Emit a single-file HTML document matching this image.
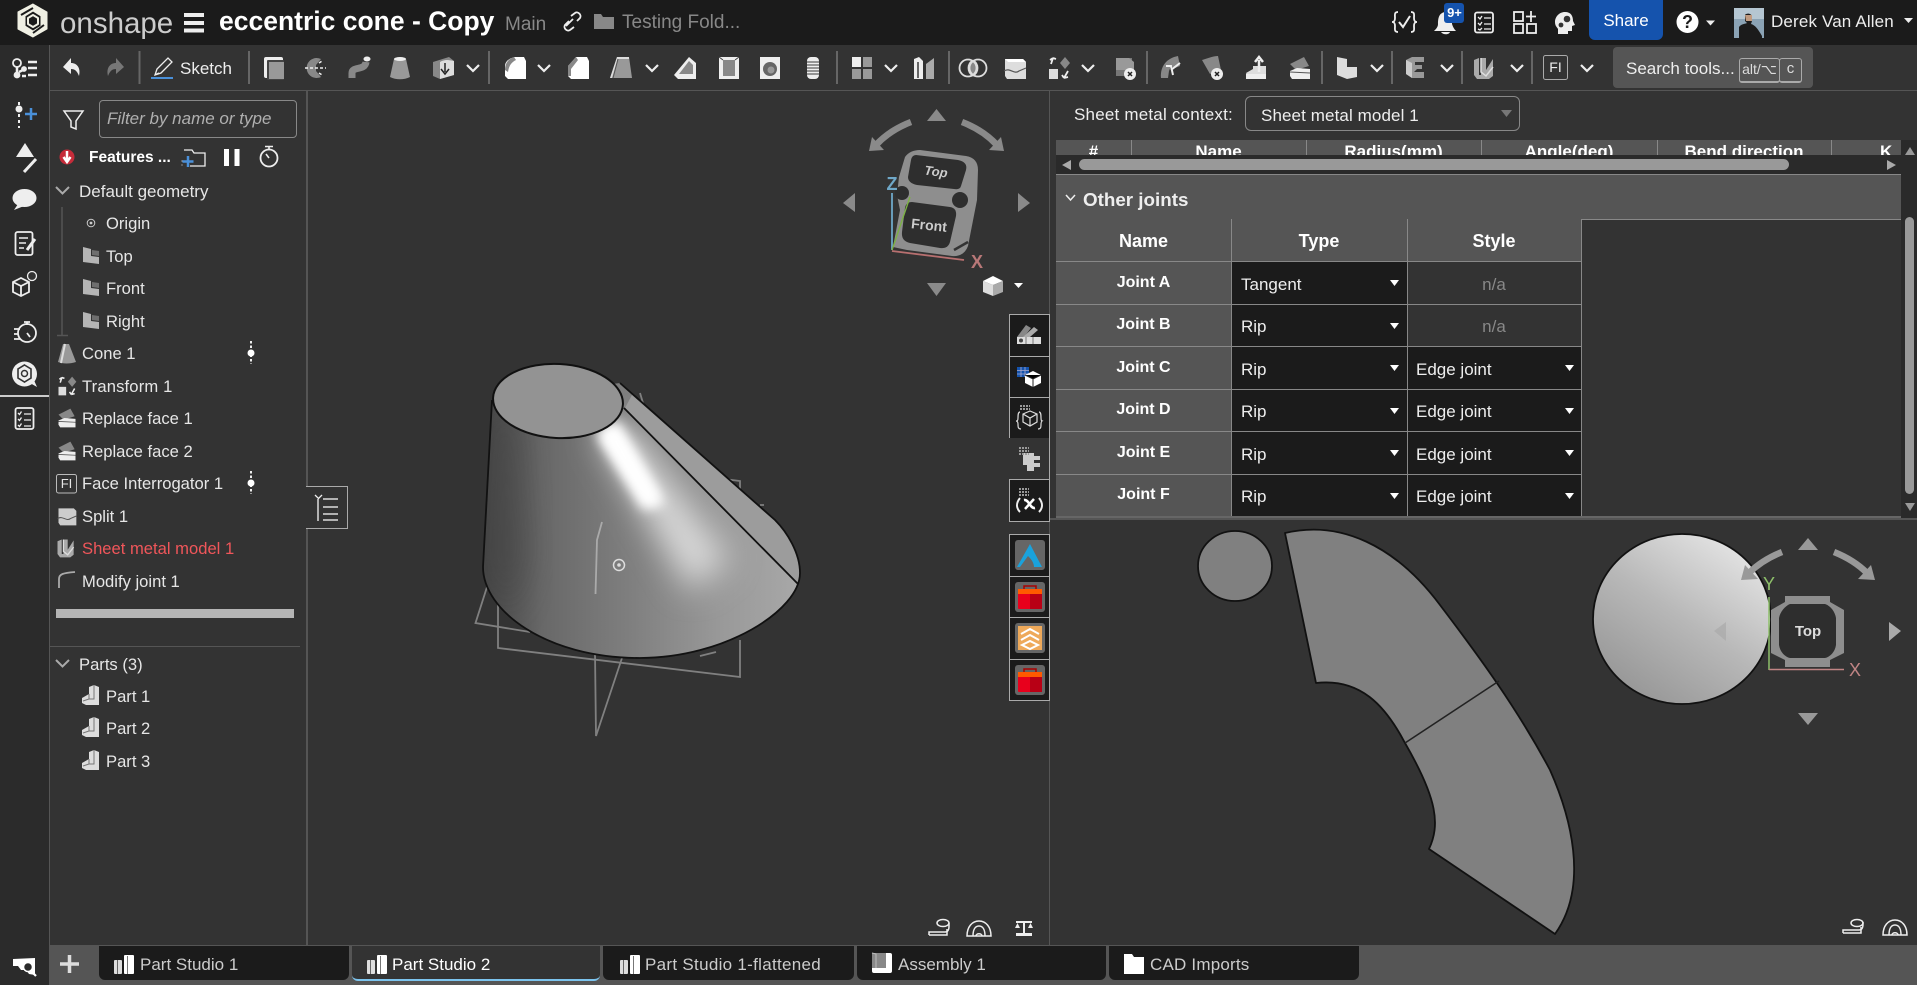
<!DOCTYPE html>
<html><head><meta charset="utf-8"><title>eccentric cone - Copy</title>
<style>
html,body{margin:0;padding:0;width:1917px;height:985px;overflow:hidden;background:#333}
body{position:relative;font-family:"Liberation Sans",sans-serif;color:#e6e6e6;font-size:17px}
.b{position:absolute}
.t{position:absolute;white-space:nowrap;line-height:20px;margin-top:1px}
.l{font-size:16.600px}
.c{text-align:center}
.w{color:#fff}
.d{font-weight:bold;color:#fff}
svg{position:absolute;left:0;top:0}
</style></head><body>
<!-- backgrounds -->
<div class="b" style="left:0;top:0;width:1917px;height:45px;background:#1b1b1b"></div>
<div class="b" style="left:0;top:45px;width:49px;height:940px;background:#2b2b2b"></div>
<div class="b" style="left:49px;top:45px;width:1px;height:940px;background:#555"></div>
<div class="b" style="left:50px;top:90px;width:1867px;height:1px;background:#555"></div>
<div class="b" style="left:306px;top:90px;width:2px;height:856px;background:#555"></div>
<div class="b" style="left:1049px;top:90px;width:1px;height:856px;background:#555"></div>
<div class="b" style="left:50px;top:945px;width:1867px;height:40px;background:#555"></div>
<div class="b" style="left:0;top:395px;width:49px;height:2px;background:#ccc"></div>
<!-- tabs -->
<div class="b" style="left:99px;top:946px;width:250px;height:34px;background:#1b1b1b;border-radius:0 0 6px 6px"></div>
<div class="b" style="left:352px;top:946px;width:248px;height:33px;background:#333;border-bottom:2px solid #7cc4ee;border-radius:0 0 6px 6px"></div>
<div class="b" style="left:603px;top:946px;width:251px;height:34px;background:#1b1b1b;border-radius:0 0 6px 6px"></div>
<div class="b" style="left:857px;top:946px;width:249px;height:34px;background:#1b1b1b;border-radius:0 0 6px 6px"></div>
<div class="b" style="left:1109px;top:946px;width:250px;height:34px;background:#1b1b1b;border-radius:0 0 6px 6px"></div>
<!-- share, search -->
<div class="b" style="left:1589px;top:0;width:74px;height:40px;background:#1553ad;border-radius:0 0 6px 6px"></div>
<div class="b" style="left:1613px;top:47px;width:200px;height:41px;background:#555;border-radius:4px"></div>
<div class="b" style="left:1739px;top:58px;width:39px;height:22px;border:1px solid #aaa;border-bottom-width:2px;border-radius:3px"></div>
<div class="b" style="left:1779px;top:58px;width:21px;height:22px;border:1px solid #aaa;border-bottom-width:2px;border-radius:3px"></div>
<!-- filter -->
<div class="b" style="left:99px;top:100px;width:196px;height:36px;border:1px solid #888;border-radius:4px"></div>
<div class="b" style="left:56px;top:609px;width:238px;height:9px;background:#b5b5b5"></div>
<div class="b" style="left:50px;top:646px;width:250px;height:1px;background:#555"></div>
<div class="b" style="left:306px;top:486px;width:41px;height:41px;background:#333;border:1px solid #aaa;border-left:none"></div>
<!-- side toolbar -->
<div class="b" style="left:1009px;top:314px;width:39px;height:206px;background:#1b1b1b;border:1px solid #aaa"></div>
<div class="b" style="left:1009px;top:438px;width:40px;height:41px;background:#333"></div>
<div class="b" style="left:1009px;top:356px;width:40px;height:1px;background:#aaa"></div>
<div class="b" style="left:1009px;top:397px;width:40px;height:1px;background:#aaa"></div>
<div class="b" style="left:1009px;top:479px;width:40px;height:1px;background:#aaa"></div>
<div class="b" style="left:1009px;top:534px;width:39px;height:165px;background:#1b1b1b;border:1px solid #aaa"></div>
<div class="b" style="left:1009px;top:576px;width:40px;height:1px;background:#aaa"></div>
<div class="b" style="left:1009px;top:617px;width:40px;height:1px;background:#aaa"></div>
<div class="b" style="left:1009px;top:659px;width:40px;height:1px;background:#aaa"></div>
<!-- right panel: select -->
<div class="b" style="left:1245px;top:96px;width:273px;height:33px;border:1px solid #888;border-radius:6px"></div>
<!-- cropped table header -->
<div class="b" style="left:1056px;top:140px;width:845px;height:15px;background:#555;overflow:hidden">
 <div class="t c d" style="left:0;width:75px;top:1px;font-size:17px">#</div>
 <div class="t c d" style="left:75px;width:175px;top:1px;font-size:17px">Name</div>
 <div class="t c d" style="left:250px;width:175px;top:1px;font-size:17px">Radius(mm)</div>
 <div class="t c d" style="left:425px;width:176px;top:1px;font-size:17px">Angle(deg)</div>
 <div class="t c d" style="left:601px;width:174px;top:1px;font-size:17px">Bend direction</div>
 <div class="t d" style="left:824px;top:1px;font-size:17px">K</div>
 <div class="b" style="left:75px;top:0;width:1px;height:15px;background:#888"></div>
 <div class="b" style="left:250px;top:0;width:1px;height:15px;background:#888"></div>
 <div class="b" style="left:425px;top:0;width:1px;height:15px;background:#888"></div>
 <div class="b" style="left:601px;top:0;width:1px;height:15px;background:#888"></div>
 <div class="b" style="left:775px;top:0;width:1px;height:15px;background:#888"></div>
</div>
<div class="b" style="left:1056px;top:155px;width:845px;height:19px;background:#2a2a2a"></div>
<div class="b" style="left:1079px;top:159px;width:710px;height:11px;background:#999;border-radius:6px"></div>
<div class="b" style="left:1901px;top:140px;width:16px;height:378px;background:#2a2a2a"></div>
<div class="b" style="left:1905px;top:217px;width:9px;height:277px;background:#999;border-radius:5px"></div>
<!-- other joints header -->
<div class="b" style="left:1056px;top:174px;width:845px;height:44px;background:#555;border-top:1px solid #888;border-bottom:1px solid #888"></div>
<div class="t" style="left:1083px;top:189px;font-size:18.800px;font-weight:bold;color:#eee">Other joints</div>
<!-- joints table -->
<div class="b" style="left:1056px;top:219px;width:175px;height:298px;background:#555"></div>
<div class="b" style="left:1231px;top:219px;width:350px;height:42px;background:#555"></div>
<div class="b" style="left:1231px;top:261px;width:176px;height:256px;background:#1b1b1b"></div>
<div class="b" style="left:1407px;top:346px;width:174px;height:171px;background:#1b1b1b"></div>
<div class="b" style="left:1056px;top:261px;width:525px;height:1px;background:#888"></div>
<div class="b" style="left:1056px;top:304px;width:525px;height:1px;background:#888"></div>
<div class="b" style="left:1056px;top:346px;width:525px;height:1px;background:#888"></div>
<div class="b" style="left:1056px;top:389px;width:525px;height:1px;background:#888"></div>
<div class="b" style="left:1056px;top:431px;width:525px;height:1px;background:#888"></div>
<div class="b" style="left:1056px;top:474px;width:525px;height:1px;background:#888"></div>
<div class="b" style="left:1231px;top:219px;width:1px;height:298px;background:#888"></div>
<div class="b" style="left:1407px;top:219px;width:1px;height:298px;background:#888"></div>
<div class="b" style="left:1581px;top:219px;width:1px;height:298px;background:#888"></div>
<div class="b" style="left:1056px;top:516px;width:845px;height:2px;background:#666"></div>
<div class="b" style="left:1050px;top:518px;width:867px;height:2px;background:#555"></div>

<svg width="1917" height="985" viewBox="0 0 1917 985" xmlns="http://www.w3.org/2000/svg">
<defs>
<linearGradient id="cg" gradientUnits="userSpaceOnUse" x1="485" y1="520" x2="800" y2="520">
 <stop offset="0" stop-color="#474747"/><stop offset=".18" stop-color="#686868"/><stop offset=".45" stop-color="#7e7e7e"/><stop offset=".75" stop-color="#999"/><stop offset="1" stop-color="#a8a8a8"/>
</linearGradient>
<linearGradient id="bg" gradientUnits="userSpaceOnUse" x1="1740" y1="540" x2="1630" y2="700">
 <stop offset="0" stop-color="#e6e6e6"/><stop offset=".5" stop-color="#b8b8b8"/><stop offset="1" stop-color="#959595"/>
</linearGradient>
<filter id="bl" x="-50%" y="-50%" width="200%" height="200%"><feGaussianBlur stdDeviation="6"/></filter>
<filter id="bl2" x="-50%" y="-50%" width="200%" height="200%"><feGaussianBlur stdDeviation="16"/></filter>
<clipPath id="cc"><path d="M492 400L483 567C483 610 545 658 640 658C725 658 800 610 800 573C800 553 787 532 775 520L620 383Z"/></clipPath>
<g id="pl"><path d="M0 -9L8 -7V0L16 1V8L0 6Z" fill="#b5b5b5"/><path d="M9 -6L16 -5V0L9 -1Z" fill="#6e6e6e"/></g>
<g id="prt"><path d="M0 2L7 -2V-9L12 -11L17 -9V9H4L0 7Z" fill="#ddd"/><path d="M7 -2V3L1 5M12 -11V3H7" fill="none" stroke="#777" stroke-width="1"/></g>
<g id="tb"><rect x="0" y="-5" width="8" height="14" rx="1" fill="#ddd"/><rect x="3" y="-5" width="1" height="14" fill="#666"/><rect x="10" y="-10" width="10" height="19" rx="1" fill="#fff"/><rect x="13" y="-9" width="1" height="18" fill="#777"/></g>
<path id="chv" d="M-6 -3L0 3L6 -3" fill="none" stroke="#eee" stroke-width="2.200"/>
</defs>

<!-- logo -->
<g fill="none" stroke="#f0f0e4" stroke-linejoin="round">
 <path d="M33 4L47 12V29L33 37L18 29V12Z" fill="#f0f0e4" stroke-width="1"/>
 <path d="M33 11L41 16V26L33 31L25 26V16Z" fill="#1b1b1b" stroke-width="1"/>
 <path d="M33 15L38 18V24L33 27L28 24V18Z" stroke-width="2"/>
 <path d="M21 15L33 8M44 25L33 33" stroke="#1b1b1b" stroke-width="2"/>
</g>
<!-- hamburger -->
<g fill="#eee"><rect x="184" y="13" width="20" height="4"/><rect x="184" y="21" width="20" height="4"/><rect x="184" y="28.500" width="20" height="4"/></g>
<!-- link -->
<path d="M566 26L573 19M571 16L575 13C578 11 582 15 580 18L577 21M569 21L565 25C563 28 567 32 570 30L574 27" fill="none" stroke="#eee" stroke-width="1.800"/>
<path d="M594 14H601L603 17H614V29H594Z" fill="#888"/>
<!-- top right -->
<g fill="none" stroke="#eee" stroke-width="1.800">
 <path d="M1398 12C1394 12 1395 15 1395 18C1395 21 1394 22 1392 22C1394 22 1395 23 1395 26C1395 29 1394 32 1398 32M1411 12C1415 12 1414 15 1414 18C1414 21 1415 22 1417 22C1415 22 1414 23 1414 26C1414 29 1415 32 1411 32"/>
 <path d="M1399 22L1403 27L1410 16" stroke-width="2"/>
 <rect x="1475" y="12.500" width="18" height="20" rx="2"/>
 <path d="M1478 17l2 2 2-3M1478 23l2 2 2-3M1478 29l2 1 2-2M1484 18h7M1484 24h7M1484 29h7" stroke-width="1.300"/>
 <rect x="1514" y="12" width="9" height="9"/><rect x="1514" y="24" width="9" height="9"/><rect x="1527" y="24" width="9" height="9"/>
 <path d="M1531 11v11M1526 16.500h10"/>
</g>
<path d="M1445 12C1439 13 1438 18 1438 24C1438 27 1436 29 1434 31H1456C1454 29 1453 27 1452 24V18ZM1441 32H1450C1449 35 1443 35 1441 32Z" fill="#eee"/>
<rect x="1444" y="3" width="20" height="20" rx="3" fill="#1553ad"/>
<path d="M1565 12C1559 12 1555 17 1555 22C1555 26 1557 27 1558 29V34H1568V31H1572V26L1575 25L1573 21C1573 16 1571 12 1565 12Z" fill="#eee"/>
<circle cx="1567" cy="19" r="3.300" fill="#333"/><circle cx="1561" cy="25" r="2.400" fill="#333"/>
<circle cx="1687.500" cy="22" r="11" fill="#fff"/>
<path d="M1715 20.500h-9l4.500 5z" fill="#eee"/><path d="M1904 18h9l-4.500 5z" fill="#eee"/>
<rect x="1734" y="8" width="30" height="30" fill="#8ba3b5"/><rect x="1734" y="8" width="30" height="11" fill="#b5c6d2"/>
<path d="M1739 38V27C1741 24 1745 24 1747 23L1745 21V15C1746 13 1751 13 1752 16V21L1751 24C1755 25 1758 29 1762 36V38Z" fill="#1b1b1b"/>
<path d="M1745 15h7v6h-6z" fill="#c09a80"/>

<!-- toolbar -->
<path d="M63 67L71 58V63C77 63 81 68 79 76C77 71 75 69 71 69V74Z" fill="#eee"/>
<path d="M124 67L116 58V63C110 63 106 68 108 76C110 71 112 69 116 69V74Z" fill="#777"/>
<g fill="#666"><rect x="138.500" y="51" width="2" height="33"/><rect x="248" y="51" width="2" height="33"/><rect x="488" y="51" width="2" height="33"/><rect x="836" y="51" width="2" height="33"/><rect x="948" y="51" width="2" height="33"/><rect x="1146" y="51" width="2" height="33"/><rect x="1321" y="51" width="2" height="33"/><rect x="1391" y="51" width="2" height="33"/><rect x="1461" y="51" width="2" height="33"/><rect x="1531" y="51" width="2" height="33"/></g>
<path d="M155 75L157 69L168 58L172 62L161 73ZM155 75L159 73" fill="none" stroke="#eee" stroke-width="1.300"/>
<rect x="151" y="77" width="22" height="2" fill="#4a90d9"/>
<!-- 274 part studio -->
<g transform="translate(274 68)"><rect x="-10" y="-11" width="19" height="21" rx="2" fill="#eee"/><rect x="-7" y="-8" width="17" height="20" rx="1" fill="#444"/><rect x="-5" y="-6" width="15" height="17" fill="#999"/></g>
<!-- 315 revolve -->
<g transform="translate(315 68)"><path d="M6 -9A10 10 0 1 0 6 9L1 3V-3Z" fill="#888"/><path d="M-10 0H11M4 -5L7 -7M4 5L7 7" stroke="#eee" stroke-width="1.500" stroke-dasharray="3 2" fill="none"/></g>
<!-- 359 sweep -->
<g transform="translate(359 68)"><path d="M-7 10V5C-7 -2 6 3 7 -6" fill="none" stroke="#888" stroke-width="7"/><ellipse cx="8" cy="-9" rx="3.500" ry="2.500" fill="#eee"/></g>
<!-- 400 loft -->
<g transform="translate(400 68)"><path d="M-6 -9H6L10 9C4 12 -4 12 -10 9Z" fill="#999"/><ellipse cx="0" cy="-9" rx="6" ry="2" fill="#eee"/></g>
<!-- 443 thicken -->
<g transform="translate(443 68)"><path d="M-10 -6L6 -11L11 -7V7L-3 11L-10 8Z" fill="#888"/><path d="M-3 -6C2 -9 6 -8 11 -7V7L-3 11Z" fill="#ddd"/><path d="M2 -5V4M-2 1L2 6L6 1" stroke="#222" stroke-width="1.500" fill="none"/></g>
<use href="#chv" x="473" y="68"/>
<!-- 515 fillet -->
<g transform="translate(515 68)"><path d="M-10 -2C-10 -7 -5 -10 0 -11L9 -11L11 -7V11H-7L-10 8Z" fill="#fff"/><path d="M-10 2C-10 -6 -5 -10 -1 -11L1 -8C-3 -6 -6 -3 -7 4Z" fill="#888"/></g>
<use href="#chv" x="544" y="68"/>
<!-- 578 chamfer -->
<g transform="translate(578 68)"><path d="M-10 -2L-2 -11H9L11 -7V11H-7L-10 8Z" fill="#fff"/><path d="M-10 -2L-2 -11L0 -8L-7 1V8L-10 8Z" fill="#888"/></g>
<!-- 621 draft -->
<g transform="translate(621 68)"><path d="M-4 -11H8L11 10H-11Z" fill="#999"/><path d="M-4 -11H8L8 -9H-3.500L-9 10H-11Z" fill="#ddd"/><path d="M-3 -9L-8 10" stroke="#555"/></g>
<use href="#chv" x="652" y="68"/>
<!-- 685 rib -->
<g transform="translate(685 68)"><path d="M4 -11L11 -5V11H-7L-11 7Z" fill="#eee"/><path d="M4 -7L8 -3V6H-6Z" fill="#888"/></g>
<!-- 729 shell -->
<g transform="translate(729 68)"><rect x="-10" y="-11" width="20" height="22" fill="#eee"/><rect x="-6" y="-8" width="12" height="16" fill="#888"/><path d="M-10 -11L-6 -8M10 -11L6 -8" stroke="#444"/></g>
<!-- 770 hole -->
<g transform="translate(770 68)"><rect x="-10" y="-11" width="20" height="22" fill="#eee"/><circle cx="0" cy="1" r="7" fill="#666"/><circle cx="1" cy="2" r="3.500" fill="#999"/></g>
<!-- 813 thread -->
<g transform="translate(813 68)"><rect x="-6" y="-11" width="12" height="22" rx="4" fill="#eee"/><path d="M-6 -6H6M-6 -3H6M-6 0H6M-6 3H6M-6 6H6" stroke="#777" stroke-width="1.500"/></g>
<!-- 862 pattern -->
<g transform="translate(862 68)" fill="#999"><rect x="-10" y="-11" width="9" height="10" fill="#eee"/><rect x="1" y="-11" width="9" height="10"/><rect x="-10" y="1" width="9" height="10"/><rect x="1" y="1" width="9" height="10"/></g>
<use href="#chv" x="891" y="68"/>
<!-- 924 mirror -->
<g transform="translate(924 68)"><path d="M-10 -9L-5 -11L-1 -7V11H-10Z" fill="#eee"/><path d="M10 -10V11H2V-4Z" fill="#aaa"/><path d="M0 -11V11" stroke="#333" stroke-width="1.500"/><path d="M-6 -6V10" stroke="#666" stroke-width="2"/></g>
<!-- 973 boolean -->
<g transform="translate(973 68)" fill="none" stroke="#ddd" stroke-width="1.800"><path d="M0 -7.500A8.500 8.500 0 0 1 0 7.500A8.500 8.500 0 0 1 0 -7.500" fill="#888"/><circle cx="-5" cy="0" r="8.500"/><circle cx="5" cy="0" r="8.500"/></g>
<!-- 1015 split -->
<g transform="translate(1015 68)"><path d="M-10 -9H8L11 -6V11H-8L-10 8Z" fill="#ddd"/><path d="M-10 -9H8L11 -6H-7Z" fill="#fff"/><path d="M-11 3C-5 -1 -1 7 4 3L11 0" fill="none" stroke="#555" stroke-width="1.200"/></g>
<!-- 1059 transform -->
<g transform="translate(1059 68)"><path d="M1 -5L6 -11L11 -5L6 1Z" fill="#888"/><rect x="-10" y="1" width="9" height="10" fill="#ddd"/><path d="M-8 -4L-6 -10M-6 -10L-9 -8M-6 -10L-3 -9M9 3L5 10M5 10L9 9M5 10L3 7" stroke="#eee" stroke-width="1.800" fill="none"/></g>
<use href="#chv" x="1088" y="68"/>
<!-- 1125 delete part -->
<g transform="translate(1125 68)"><rect x="-9" y="-10" width="16" height="18" fill="#777"/><path d="M-9 -10H4L9 -6V2H-9Z" fill="#999"/><circle cx="5" cy="6" r="6" fill="#eee"/><path d="M3 4L7 8M7 4L3 8" stroke="#222" stroke-width="1.500"/></g>
<!-- 1170 modify -->
<g transform="translate(1170 68)"><path d="M-9 10C-10 -2 -3 -10 8 -12L10 -2L5 0L1 -2L-1 3L-2 10Z" fill="#888"/><path d="M-4 -2L1 -2L3 7M10 -5L1 2" stroke="#eee" stroke-width="2" fill="none"/></g>
<!-- 1213 del face -->
<g transform="translate(1213 68)"><path d="M-11 -8C-4 -10 0 -12 5 -12L8 2L-3 6Z" fill="#888"/><circle cx="4" cy="6" r="6" fill="#eee"/><path d="M2 4L6 8M6 4L2 8" stroke="#222" stroke-width="1.500"/></g>
<!-- 1256 move face -->
<g transform="translate(1256 68)"><path d="M-10 5L-3 1V-2L10 -2V10H-8Z" fill="#ddd"/><rect x="-10" y="6" width="20" height="5" fill="#eee"/><path d="M3 4V-8M-1 -6L3 -11L7 -6" stroke="#eee" stroke-width="2.500" fill="none"/></g>
<!-- 1300 replace -->
<g transform="translate(1300 68)"><path d="M-10 -4L4 -11L9 -2L-4 2Z" fill="#888"/><path d="M-10 3L-3 0L10 1V11H-8L-10 8Z" fill="#eee"/><path d="M-10 4L10 5" stroke="#555"/></g>
<!-- 1347 plane -->
<g transform="translate(1347 68)"><path d="M-10 -11L0 -9V-1L10 -1V9L0 11L-10 7Z" fill="#ddd"/></g>
<use href="#chv" x="1377" y="68"/>
<!-- 1415 -->
<g transform="translate(1415 68)"><path d="M-9 -8L-3 -11H9V-6H0V-3L7 -3V1L2 1L-1 4L9 4V10H-3L-9 6Z" fill="#999"/><path d="M-9 -8L-3 -5V10L-9 6Z" fill="#ccc"/></g>
<use href="#chv" x="1447" y="68"/>
<!-- 1484 sheet metal -->
<g transform="translate(1484 68)"><path d="M-10 -8L-5 -10V7H-3V-10H2V2L9 -9V8L5 11H-7L-10 7Z" fill="#aaa"/><path d="M-3 -10V4L2 8L9 -1" stroke="#ddd" stroke-width="1.500" fill="none"/></g>
<use href="#chv" x="1517" y="68"/>
<rect x="1543.500" y="55.500" width="24" height="24" rx="2" fill="none" stroke="#aaa"/>
<use href="#chv" x="1587" y="68"/>

<!-- left rail -->
<g fill="none" stroke="#eee" stroke-width="1.800">
 <circle cx="17" cy="63" r="4"/><circle cx="17" cy="75" r="2.500" fill="#eee"/><circle cx="24" cy="69" r="2" fill="#eee"/>
 <path d="M17 67V73M19 72L23 70M28 62H37M28 68H37M28 75H37M22 76H26" stroke-width="2.500"/>
 <path d="M19 102V128" stroke-dasharray="3 3" stroke-width="2"/>
 <path d="M16 157H34L25 143Z" fill="#eee" stroke="none"/>
 <path d="M24 172L36 159" stroke-width="3"/>
 <rect x="15.500" y="232" width="17" height="23" rx="2"/>
 <path d="M19 238H28M19 243H26M19 248H24" stroke-width="1.500"/><path d="M27 250L35 239" stroke-width="3"/>
 <path d="M13 282L21 278L29 282V292L21 296L13 292ZM13 282L21 286L29 282M21 286V296"/>
 <circle cx="32" cy="276" r="4.500" fill="#333" stroke-width="1.300"/>
 <circle cx="27" cy="333" r="9"/><path d="M24 322H30M27 325V322M27 333L30 337"/><path d="M14 329H20M14 334H18M14 339H20"/>
 <rect x="15.500" y="408" width="18" height="21" rx="2"/>
 <path d="M18 413l1.500 1.500 2-3M18 419l1.500 1.500 2-3M18 425l1.500 1.500 2-3M24 414h7M24 420h7M24 426h7" stroke-width="1.300"/>
</g>
<circle cx="19" cy="109" r="3.500" fill="#eee"/>
<path d="M31 108V120M25 114H37" stroke="#4a90d9" stroke-width="2.500"/>
<ellipse cx="24.500" cy="198" rx="12" ry="9" fill="#eee"/><path d="M18 204L14 210L24 206Z" fill="#eee"/>
<circle cx="24.500" cy="374" r="12.500" fill="#eee"/><path d="M30 383L37 387L33 378Z" fill="#eee"/>
<path d="M24.500 365L31 369V378L24.500 382L18 378V369Z" fill="none" stroke="#333" stroke-width="1.600"/><circle cx="24.500" cy="373.500" r="3" fill="none" stroke="#333" stroke-width="1.500"/>
<path d="M13 959L35 958V975L29 974L26 970H21L18 966H13Z" fill="#fff"/><circle cx="28" cy="967" r="4.500" fill="#2b2b2b" stroke="#fff" stroke-width="1.500"/><path d="M31 971L36 976" stroke="#fff" stroke-width="2.200"/>

<!-- panel icons -->
<path d="M64 111H83L76 121V129L71 127V121Z" fill="none" stroke="#eee" stroke-width="1.500"/>
<circle cx="67" cy="157" r="7.500" fill="#c62c3a"/><path d="M67 151V160M63.500 157L67 162L70.500 157" stroke="#fff" stroke-width="2.500" fill="none"/>
<path d="M184 150H192L194 153H205V166H190" fill="none" stroke="#eee" stroke-width="1.300"/><path d="M182 166V158" stroke="#888" stroke-dasharray="2 2"/>
<path d="M188 156V167M182.500 161.500H193.500" stroke="#4a90d9" stroke-width="2.500"/>
<rect x="224" y="149" width="5" height="17" fill="#fff"/><rect x="234.500" y="149" width="5" height="17" fill="#fff"/>
<circle cx="269" cy="158" r="8.500" fill="none" stroke="#eee" stroke-width="1.800"/><path d="M265 146.500H273M269 147V150M269 158L266 154" stroke="#eee" stroke-width="1.600"/>
<path d="M56 187L62.500 193.500L69 187" fill="none" stroke="#aaa" stroke-width="2"/>
<path d="M62 207V335M57 335.500H68" stroke="#555" stroke-width="1.500"/>
<circle cx="91" cy="223" r="3.800" fill="none" stroke="#ccc"/><circle cx="91" cy="223" r="1.400" fill="#ccc"/>
<use href="#pl" x="83" y="256"/><use href="#pl" x="83" y="288"/><use href="#pl" x="83" y="321"/>
<!-- feature icons -->
<path d="M63 344H69L76 362C70 364 63 364 58 362Z" fill="#999"/><path d="M65 344L61 363" stroke="#ddd" stroke-width="2"/>
<g transform="translate(67 386) scale(.85)"><path d="M1 -5L6 -11L11 -5L6 1Z" fill="#888"/><rect x="-10" y="1" width="9" height="10" fill="#ddd"/><path d="M-8 -4L-6 -10M-6 -10L-9 -8M-6 -10L-3 -9M9 3L5 10M5 10L9 9M5 10L3 7" stroke="#eee" stroke-width="1.800" fill="none"/></g>
<g transform="translate(67 418) scale(.85)"><path d="M-10 -4L4 -11L9 -2L-4 2Z" fill="#888"/><path d="M-10 3L-3 0L10 1V11H-8L-10 8Z" fill="#eee"/><path d="M-10 4L10 5" stroke="#555"/></g>
<g transform="translate(67 451) scale(.85)"><path d="M-10 -4L4 -11L9 -2L-4 2Z" fill="#888"/><path d="M-10 3L-3 0L10 1V11H-8L-10 8Z" fill="#eee"/><path d="M-10 4L10 5" stroke="#555"/></g>
<rect x="56.500" y="474.500" width="20" height="18.500" rx="2" fill="none" stroke="#bbb"/>
<g transform="translate(67 516) scale(.85)"><path d="M-10 -9H8L11 -6V11H-8L-10 8Z" fill="#ccc"/><path d="M-11 3C-5 -1 -1 7 4 3L11 0" fill="none" stroke="#555" stroke-width="1.200"/></g>
<g transform="translate(66 548) scale(.85)"><path d="M-10 -8L-5 -10V7H-3V-10H2V2L9 -9V8L5 11H-7L-10 7Z" fill="#aaa"/><path d="M-3 -10V4L2 8L9 -1" stroke="#ddd" stroke-width="1.500" fill="none"/></g>
<path d="M59 588V579C59 574 63 573 75 572" fill="none" stroke="#aaa" stroke-width="1.800"/>
<g stroke="#eee" stroke-width="2" stroke-dasharray="2.500 2"><path d="M251 341V364"/><path d="M251 471V494"/></g>
<circle cx="251" cy="353" r="3.500" fill="#fff"/><circle cx="251" cy="483" r="3.500" fill="#fff"/>
<path d="M56 660L62.500 666.500L69 660" fill="none" stroke="#aaa" stroke-width="2"/>
<use href="#prt" x="82" y="696"/><use href="#prt" x="82" y="728"/><use href="#prt" x="82" y="761"/>
<!-- collapse icon -->
<path d="M318 499V521M323 499H338M323 507H338M323 514H338M323 520H338" stroke="#ddd" stroke-width="1.500"/><path d="M315 495L318.500 498.500L322 495" fill="none" stroke="#eee" stroke-width="1.300"/>
<!-- tabs -->
<path d="M60 964H79M69.500 955V973" stroke="#ddd" stroke-width="3.500"/>
<use href="#tb" x="114" y="965"/><use href="#tb" x="367" y="965"/><use href="#tb" x="620" y="965"/>
<g transform="translate(882 963)"><rect x="-10" y="-10" width="20" height="20" rx="2" fill="#fff"/><path d="M-10 -10H4V5H-10Z" fill="#888"/><path d="M-10 -10L-6 -9V5" stroke="#bbb" fill="none"/></g>
<path d="M1124 954H1132L1134 957H1144V974H1124Z" fill="#fff"/>

<!-- viewport 1: reference planes behind cone -->
<g fill="none" stroke="#808080" stroke-width="1.800">
 <path d="M487 587L475.500 623L530 632"/>
 <path d="M498 597V648L740 677V640"/>
 <path d="M595 653L596 736L622 658"/>
 <path d="M692 475L740 481V527"/>
 <path d="M640 393L643 403M760 505H764M700 656L716 652"/>
</g>
<!-- cone -->
<path d="M492 400L483 567C483 610 545 658 640 658C725 658 800 610 800 573C800 553 787 532 775 520L620 383Z" fill="url(#cg)"/>
<g clip-path="url(#cc)">
 <path d="M520 420L490 400L484 570L510 620L530 560Z" fill="#3a3a3a" opacity=".35" filter="url(#bl2)"/>
 <path d="M595 430L630 425L730 560L690 590Z" fill="#d8d8d8" filter="url(#bl2)"/>
 <path d="M596 432L618 420L665 505L643 510Z" fill="#fff" filter="url(#bl)"/>
 <path d="M600 436L615 428L660 498L648 503Z" fill="#fff" filter="url(#bl)"/>
 <path d="M625 408L798 584L820 540L640 380Z" fill="#9c9c9c"/>
</g>
<path d="M492 400L483 567C483 610 545 658 640 658C725 658 800 610 800 573C800 553 787 532 775 520L620 383" fill="none" stroke="#111" stroke-width="1.800"/>
<path d="M624 408L798 584" stroke="#111" stroke-width="1.800"/>
<ellipse cx="558" cy="401" rx="65" ry="37" fill="#939393" stroke="#111" stroke-width="2" transform="rotate(3 558 401)"/>
<path d="M602 522L597 540L595.500 594" fill="none" stroke="#aaa" stroke-width="1.800"/>
<circle cx="619" cy="565" r="5.500" fill="none" stroke="#ddd" stroke-width="1.500"/><circle cx="619" cy="565" r="1.800" fill="#ddd"/>

<!-- cube 1 -->
<g fill="#8a8a8a">
 <path d="M927 121L936.500 109L946 121Z"/><path d="M843 203L855 193V212Z"/><path d="M1030 203L1018 193V212Z"/><path d="M927 283H946L936.500 296Z"/>
 <path d="M869 151L884 150L872 137Z"/><path d="M1004 151L989 150L1001 137Z"/>
</g>
<path d="M911 122Q890 130 876 145M962 122Q983 130 997 145" fill="none" stroke="#8a8a8a" stroke-width="6.500"/>
<path d="M905 157Q910 150 920 150L966 156Q978 158 978 170L977 200L968 246Q964 257 952 256L907 250L893 247L900 210L897 195L899 177Z" fill="#8e8e8e"/>
<path d="M916 155L958 160Q968 162 966 170L961 186Q960 190 954 189L917 185Q908 183 908 177L911 160Q912 155 916 155Z" fill="#2e2e2e"/>
<path d="M912 202L950 207Q957 208 956 216L950 242Q948 249 940 248L910 243Q901 241 902 232L905 208Q906 202 912 202Z" fill="#2e2e2e"/>
<circle cx="902" cy="193" r="7" fill="#2e2e2e"/><circle cx="960" cy="200" r="8" fill="#2e2e2e"/>
<path d="M892 193V250" stroke="#6fa8c8" stroke-width="1.800"/><path d="M892 251L964 260" stroke="#b87070" stroke-width="1.800"/><path d="M892 250L910 197" stroke="#7cb342" stroke-width="1.300"/>
<path d="M954 250L968 242" stroke="#333" stroke-width="2.500"/>
<path d="M983 281L993 276L1003 281L993 285Z" fill="#fff"/><path d="M983 281L993 285V296L983 292Z" fill="#ddd"/><path d="M1003 281L993 285V296L1003 292Z" fill="#aaa"/>
<path d="M1014 283h9l-4.500 5z" fill="#fff"/>

<!-- bottom icons vp1 -->
<g fill="none" stroke="#eee" stroke-width="1.500" transform="translate(938 927)"><path d="M-9 8V5H7C10 5 11 3 11 -1V-4"/><ellipse cx="5" cy="-4" rx="6" ry="3.500"/><path d="M-9 8H9V2"/></g>
<g fill="none" stroke="#eee" stroke-width="1.500" transform="translate(979 929)"><path d="M-12 7C-12 -2 -7 -8 0 -8C7 -8 12 -2 12 7Z"/><path d="M-6 7C-6 1 -4 -3 0 -3C4 -3 6 1 6 7M-3 7C-3 4 3 4 3 7"/></g>
<g fill="#eee" transform="translate(1024 929)"><rect x="-8" y="-8" width="16" height="2"/><rect x="-1" y="-8" width="2" height="12"/><rect x="-8" y="4" width="16" height="3"/><path d="M-9 -1H-4L-6.500 -6ZM4 -1H9L6.500 -6Z"/></g>

<!-- side toolbar icons -->
<g transform="translate(1029 337)"><path d="M-12 0L-3 -12L2 -9L-5 0Z" fill="#888"/><path d="M-6 0L5 -10L9 -7L1 0Z" fill="#aaa"/><rect x="-12" y="0" width="24" height="7" fill="#ddd"/><circle cx="-8" cy="3.500" r="2" fill="#444"/><path d="M-3 0V7M4 0V7" stroke="#777"/></g>
<g transform="translate(1029 377)"><rect x="-12" y="-10" width="12" height="10" fill="#1553ad"/><path d="M-8 -10V0M-4 -10V0M-12 -6.500H0M-12 -3H0" stroke="#aac" stroke-width=".8"/><path d="M4 -6L12 -2V6L4 10L-4 6V-2Z" fill="#fff"/><path d="M-4 -2L4 2L12 -2M4 2V10" stroke="#222" stroke-width="1"/></g>
<g transform="translate(1029 418)" fill="none" stroke="#ddd" stroke-width="1.200"><path d="M-6 -4L1 -7L8 -4V4L1 8L-6 4ZM-6 -4L1 0L8 -4M1 0V8"/><path d="M-9 -6C-11 -6 -11 -3 -11 0C-11 3 -12 3 -13 3C-12 3 -11 4 -11 6C-11 9 -11 11 -8 11M10 -6C12 -6 12 -3 12 0C12 3 13 3 13 3C13 3 12 4 12 6C12 9 12 11 9 11"/><path d="M-9 -12H1M-9 -9H1" stroke="#999" stroke-width="2" stroke-dasharray="2 1"/></g>
<g transform="translate(1029 459)"><path d="M-6 -6H5V-3H11V1H5V4H11V8H5V12H-2V6H-6Z" fill="#ccc"/><path d="M-10 -11H0M-10 -8H0M-10 -5H0" stroke="#999" stroke-width="2" stroke-dasharray="2 1"/></g>
<g transform="translate(1029 501)"><path d="M-9 -3C-13 2 -13 7 -9 11M10 -3C14 2 14 7 10 11" fill="none" stroke="#eee" stroke-width="2"/><path d="M-5 -1C0 -2 1 8 6 7M5 -2L-4 8" stroke="#fff" stroke-width="2.500" fill="none"/><path d="M-10 -12H0M-10 -9H0M-10 -6H0" stroke="#999" stroke-width="2" stroke-dasharray="2 1"/></g>
<rect x="1015" y="540" width="30" height="30" rx="3" fill="#666"/>
<path d="M1030 544L1042 567H1034C1034 562 1030 558 1028 556L1020 567H1017L1030 544Z" fill="#1aa2dc"/>
<rect x="1015" y="582" width="30" height="30" rx="3" fill="#666"/>
<path d="M1024 589V586H1036V589" fill="none" stroke="#a00" stroke-width="1.500"/><rect x="1018" y="589" width="24" height="20" rx="1" fill="#e8001c"/><rect x="1030" y="589" width="12" height="20" fill="#b80015"/><rect x="1018" y="589" width="24" height="5" fill="#ff5a00"/>
<rect x="1015" y="623" width="30" height="30" rx="3" fill="#666"/>
<rect x="1018" y="626" width="24" height="24" fill="#eea95a"/><path d="M1021 634L1030 629L1039 634M1021 640L1030 635L1039 640M1022 645L1030 641L1038 645L1030 649Z" fill="none" stroke="#fff" stroke-width="2"/>
<rect x="1015" y="665" width="30" height="30" rx="3" fill="#666"/>
<path d="M1024 672V669H1036V672" fill="none" stroke="#a00" stroke-width="1.500"/><rect x="1018" y="672" width="24" height="20" rx="1" fill="#e8001c"/><rect x="1030" y="672" width="12" height="20" fill="#b80015"/><rect x="1018" y="672" width="24" height="5" fill="#ff5a00"/>

<!-- right panel bits -->
<path d="M1501 110H1512L1506.500 117Z" fill="#777"/>
<path d="M1071 160V170L1062 165Z" fill="#aaa"/><path d="M1887 160V170L1896 165Z" fill="#aaa"/>
<path d="M1905 155L1910 147L1915 155Z" fill="#999"/><path d="M1905 503H1915L1910 511Z" fill="#999"/>
<path d="M1066 195L1070.500 200L1075 195" fill="none" stroke="#eee" stroke-width="1.500"/>
<g fill="#fff">
 <path d="M1390 280h9l-4.500 6z"/><path d="M1390 323h9l-4.500 6z"/>
 <path d="M1390 365h9l-4.500 6z"/><path d="M1390 408h9l-4.500 6z"/><path d="M1390 450h9l-4.500 6z"/><path d="M1390 493h9l-4.500 6z"/>
 <path d="M1565 365h9l-4.500 6z"/><path d="M1565 408h9l-4.500 6z"/><path d="M1565 450h9l-4.500 6z"/><path d="M1565 493h9l-4.500 6z"/>
</g>

<!-- viewport 2 -->
<ellipse cx="1235" cy="566" rx="37" ry="35" fill="#808080" stroke="#111" stroke-width="1.800"/>
<path d="M1285 533C1340 520 1395 545 1440 605C1478 655 1517 708 1550 770C1570 815 1590 885 1555 934L1429 849C1440 825 1438 800 1405 743C1385 705 1360 678 1316 683Z" fill="#808080" stroke="#111" stroke-width="1.800" stroke-linejoin="round"/>
<path d="M1499 681L1405 743" stroke="#222" stroke-width="1.600"/>
<ellipse cx="1682" cy="619" rx="89" ry="85" fill="url(#bg)" stroke="#111" stroke-width="1.800"/>
<!-- cube 2 -->
<g fill="#999">
 <path d="M1798 550L1808 538L1818 550Z"/><path d="M1714 631L1726 622V641Z" fill="#aaa" opacity=".7"/><path d="M1901 631L1889 622V641Z" fill="#aaa"/><path d="M1798 713H1818L1808 725Z"/>
 <path d="M1741 580L1758 579L1745 565Z"/><path d="M1875 580L1858 579L1871 565Z"/>
</g>
<path d="M1782 552Q1762 560 1749 573M1834 552Q1854 560 1867 573" fill="none" stroke="#999" stroke-width="6.500"/>
<path d="M1785 596H1830V602L1844 610V653L1830 660V667H1785V660L1771 653V610L1785 602Z" fill="#8e8e8e"/>
<path d="M1790 604H1825C1831 606 1835 612 1836 618V645C1835 652 1830 657 1825 658H1790C1785 657 1780 652 1779 645V618C1780 612 1785 606 1790 604Z" fill="#2e2e2e"/>
<path d="M1769 597V670" stroke="#8ec06a" stroke-width="1.500"/><path d="M1769 669.500H1844" stroke="#c08484" stroke-width="1.500"/>
<!-- bottom right icons vp2 -->
<g fill="none" stroke="#eee" stroke-width="1.500" transform="translate(1852 927)"><path d="M-9 6V3H7C10 3 11 1 11 -3V-5"/><ellipse cx="5" cy="-4" rx="6" ry="3.500"/><path d="M-9 6H9V0"/></g>
<g fill="none" stroke="#eee" stroke-width="1.500" transform="translate(1895 928)"><path d="M-12 7C-12 -2 -7 -8 0 -8C7 -8 12 -2 12 7Z"/><path d="M-6 7C-6 1 -4 -3 0 -3C4 -3 6 1 6 7M-3 7C-3 4 3 4 3 7"/></g>
<!-- cube labels -->
<text x="936" y="176" font-family="Liberation Sans" font-size="13" font-weight="bold" fill="#ccc" text-anchor="middle" transform="rotate(8 936 172)" font-style="italic">Top</text>
<text x="929" y="230" font-family="Liberation Sans" font-size="14" font-weight="bold" fill="#ccc" text-anchor="middle" transform="rotate(6 929 226)">Front</text>
<text x="892" y="190" font-family="Liberation Sans" font-size="18" font-weight="bold" fill="#6fa8c8" text-anchor="middle">Z</text>
<text x="977" y="268" font-family="Liberation Sans" font-size="18" font-weight="bold" fill="#b87878" text-anchor="middle">X</text>
<text x="1808" y="636" font-family="Liberation Sans" font-size="15" font-weight="bold" fill="#ddd" text-anchor="middle">Top</text>
<text x="1769" y="590" font-family="Liberation Sans" font-size="18" fill="#8ec06a" text-anchor="middle">Y</text>
<text x="1855" y="676" font-family="Liberation Sans" font-size="18" fill="#c08484" text-anchor="middle">X</text>
</svg>

<!-- text -->
<div class="t" style="left:60px;top:9px;font-size:29.500px;line-height:28px;color:#ccc">onshape</div>
<div class="t d" style="left:219px;top:6px;font-size:26.500px;line-height:28px">eccentric cone - Copy</div>
<div class="t" style="left:505px;top:14px;font-size:19px;color:#888">Main</div>
<div class="t" style="left:622px;top:12px;font-size:19px;color:#888">Testing Fold...</div>
<div class="t d" style="left:1445px;top:2px;width:19px;text-align:center;font-size:13px;line-height:19px">9+</div>
<div class="t c" style="left:1589px;top:10px;width:74px;color:#fff">Share</div>
<div class="t c d" style="left:1676px;top:11px;width:23px;color:#1b1b1b;font-size:18px">?</div>
<div class="t" style="left:1771px;top:11px;color:#eee;letter-spacing:.15px">Derek Van Allen</div>
<div class="t" style="left:180px;top:58px;color:#eee">Sketch</div>
<div class="t c" style="left:1543px;top:56px;width:25px;font-size:14px;color:#eee">FI</div>
<div class="t" style="left:1626px;top:58px;color:#eee">Search tools...</div>
<div class="t c" style="left:1739px;top:58px;width:41px;font-size:14px;color:#ddd">alt/⌥</div>
<div class="t c" style="left:1779px;top:58px;width:23px;font-size:15px;color:#ddd">c</div>
<div class="t" style="left:107px;top:108px;font-style:italic;color:#b0b0b0">Filter by name or type</div>
<div class="t d" style="left:89px;top:147px;font-size:15.500px">Features ...</div>
<div class="t" style="left:79px;top:181px">Default geometry</div>
<div class="t l" style="left:106px;top:213px">Origin</div>
<div class="t l" style="left:106px;top:246px">Top</div>
<div class="t l" style="left:106px;top:278px">Front</div>
<div class="t l" style="left:106px;top:311px">Right</div>
<div class="t l" style="left:82px;top:343px">Cone 1</div>
<div class="t l" style="left:82px;top:376px;letter-spacing:.15px">Transform 1</div>
<div class="t l" style="left:82px;top:408px">Replace face 1</div>
<div class="t l" style="left:82px;top:441px">Replace face 2</div>
<div class="t c" style="left:56px;top:473px;width:21px;font-size:13px">FI</div>
<div class="t l" style="left:82px;top:473px">Face Interrogator 1</div>
<div class="t l" style="left:82px;top:506px">Split 1</div>
<div class="t l" style="left:82px;top:538px;color:#f0565a">Sheet metal model 1</div>
<div class="t l" style="left:82px;top:571px">Modify joint 1</div>
<div class="t l" style="left:79px;top:654px">Parts (3)</div>
<div class="t l" style="left:106px;top:686px">Part 1</div>
<div class="t l" style="left:106px;top:718px">Part 2</div>
<div class="t l" style="left:106px;top:751px">Part 3</div>
<div class="t" style="left:140px;top:954px;color:#ccc">Part Studio 1</div>
<div class="t" style="left:392px;top:954px;color:#fff">Part Studio 2</div>
<div class="t" style="left:645px;top:954px;color:#ccc;letter-spacing:.3px">Part Studio 1-flattened</div>
<div class="t" style="left:898px;top:954px;color:#ccc">Assembly 1</div>
<div class="t" style="left:1150px;top:954px;color:#ccc;letter-spacing:.2px">CAD Imports</div>
<div class="t" style="left:1074px;top:104px;color:#eee;letter-spacing:.2px">Sheet metal context:</div>
<div class="t" style="left:1261px;top:105px;color:#eee;letter-spacing:.1px">Sheet metal model 1</div>
<div class="t c d" style="left:1056px;top:230px;width:175px;font-size:18px">Name</div>
<div class="t c d" style="left:1231px;top:230px;width:176px;font-size:18px">Type</div>
<div class="t c d" style="left:1407px;top:230px;width:174px;font-size:18px">Style</div>
<div class="t c d" style="left:1056px;top:272px;width:175px;font-size:16px">Joint A</div>
<div class="t c d" style="left:1056px;top:314px;width:175px;font-size:16px">Joint B</div>
<div class="t c d" style="left:1056px;top:357px;width:175px;font-size:16px">Joint C</div>
<div class="t c d" style="left:1056px;top:399px;width:175px;font-size:16px">Joint D</div>
<div class="t c d" style="left:1056px;top:442px;width:175px;font-size:16px">Joint E</div>
<div class="t c d" style="left:1056px;top:484px;width:175px;font-size:16px">Joint F</div>
<div class="t" style="left:1241px;top:274px;color:#eee">Tangent</div>
<div class="t" style="left:1241px;top:316px;color:#eee">Rip</div>
<div class="t" style="left:1241px;top:359px;color:#eee">Rip</div>
<div class="t" style="left:1241px;top:401px;color:#eee">Rip</div>
<div class="t" style="left:1241px;top:444px;color:#eee">Rip</div>
<div class="t" style="left:1241px;top:486px;color:#eee">Rip</div>
<div class="t c" style="left:1407px;top:274px;width:174px;color:#888">n/a</div>
<div class="t c" style="left:1407px;top:316px;width:174px;color:#888">n/a</div>
<div class="t" style="left:1416px;top:359px;color:#eee">Edge joint</div>
<div class="t" style="left:1416px;top:401px;color:#eee">Edge joint</div>
<div class="t" style="left:1416px;top:444px;color:#eee">Edge joint</div>
<div class="t" style="left:1416px;top:486px;color:#eee">Edge joint</div>
</body></html>
